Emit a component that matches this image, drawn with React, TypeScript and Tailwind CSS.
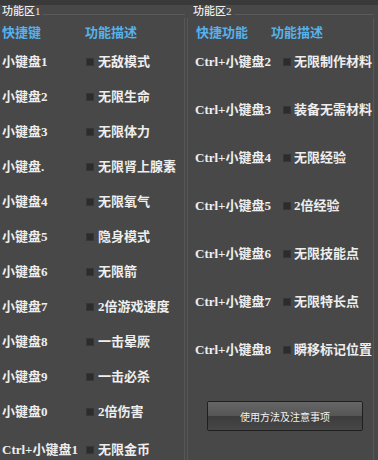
import React from "react";

const leftRows: [string, string][] = [
  ["小键盘1", "无敌模式"],
  ["小键盘2", "无限生命"],
  ["小键盘3", "无限体力"],
  ["小键盘.", "无限肾上腺素"],
  ["小键盘4", "无限氧气"],
  ["小键盘5", "隐身模式"],
  ["小键盘6", "无限箭"],
  ["小键盘7", "2倍游戏速度"],
  ["小键盘8", "一击晕厥"],
  ["小键盘9", "一击必杀"],
  ["小键盘0", "2倍伤害"],
  ["Ctrl+小键盘1", "无限金币"],
];

const rightRows: [string, string][] = [
  ["Ctrl+小键盘2", "无限制作材料"],
  ["Ctrl+小键盘3", "装备无需材料"],
  ["Ctrl+小键盘4", "无限经验"],
  ["Ctrl+小键盘5", "2倍经验"],
  ["Ctrl+小键盘6", "无限技能点"],
  ["Ctrl+小键盘7", "无限特长点"],
  ["Ctrl+小键盘8", "瞬移标记位置"],
];

function Box() {
  return <div className="w-[8px] h-[8px] bg-[#2c2c2c] border border-[#363636] shrink-0" />;
}

export default function App() {
  return (
    <div className="w-[378px] h-[460px] overflow-hidden bg-[#484848] text-[#eeeeee] font-['Liberation_Serif','Noto_Sans_CJK_SC',serif]">
      <div className="h-[5px] bg-[#3a3a3a]" />
      <div className="flex">
        {/* Left panel */}
        <div className="w-[185px] flex flex-col">
          <div className="h-[13px] flex">
            <span className="ml-[2px] text-[11px] leading-[13px] font-medium whitespace-nowrap">功能区1</span>
            <div className="flex-1 self-end mb-[3px] ml-[2px] h-px bg-[#5a5a5a]" />
          </div>
          <div className="border-r border-[#575757] h-[450px]">
            <div className="mt-[6px] h-[18px] flex items-center text-[13px] font-semibold text-[#55b2ea]">
              <span className="ml-[2px] w-[83px]">快捷键</span>
              <span>功能描述</span>
            </div>
            <div className="mt-[2px] flex flex-col">
              {leftRows.map(([k, d], i) => (
                <div
                  key={i}
                  className={
                    "h-[35px] flex items-center text-[13px] font-semibold whitespace-nowrap" +
                    (i === leftRows.length - 1 ? " mt-[3px]" : "")
                  }
                >
                  <span className="ml-[2px] w-[84px] shrink-0">{k}</span>
                  <Box />
                  <span className="ml-[4px]">{d}</span>
                </div>
              ))}
            </div>
          </div>
        </div>
        {/* Right panel */}
        <div className="ml-[2px] w-[187px] flex flex-col">
          <div className="h-[13px] flex">
            <span className="ml-[6px] text-[11px] leading-[13px] font-medium whitespace-nowrap">功能区2</span>
            <div className="flex-1 self-end mb-[3px] ml-[2px] h-px bg-[#5a5a5a]" />
          </div>
          <div className="border-l border-r border-[#575757] h-[450px]">
            <div className="mt-[6px] h-[18px] flex items-center text-[13px] font-semibold text-[#55b2ea]">
              <span className="ml-[8px] w-[75px]">快捷功能</span>
              <span>功能描述</span>
            </div>
            <div className="mt-[2px] flex flex-col gap-[13px]">
              {rightRows.map(([k, d], i) => (
                <div key={i} className="h-[35px] flex items-center text-[13px] font-semibold whitespace-nowrap">
                  <span className="ml-[7px] w-[88px] shrink-0">{k}</span>
                  <Box />
                  <span className="ml-[3px]">{d}</span>
                </div>
              ))}
            </div>
            <div className="mt-[34px] ml-[19px] w-[156px] h-[30px] border border-[#1f1f1f] rounded-[2px] flex flex-col overflow-hidden relative">
              <div className="h-1/2 bg-gradient-to-b from-[#666666] to-[#555555]" />
              <div className="h-1/2 bg-gradient-to-b from-[#3c3c3c] to-[#474747]" />
              <span className="absolute inset-0 flex items-center justify-center text-[10px] text-[#f2f2f2] font-['Noto_Sans_CJK_SC',sans-serif]">
                使用方法及注意事项
              </span>
            </div>
          </div>
        </div>
      </div>
    </div>
  );
}
